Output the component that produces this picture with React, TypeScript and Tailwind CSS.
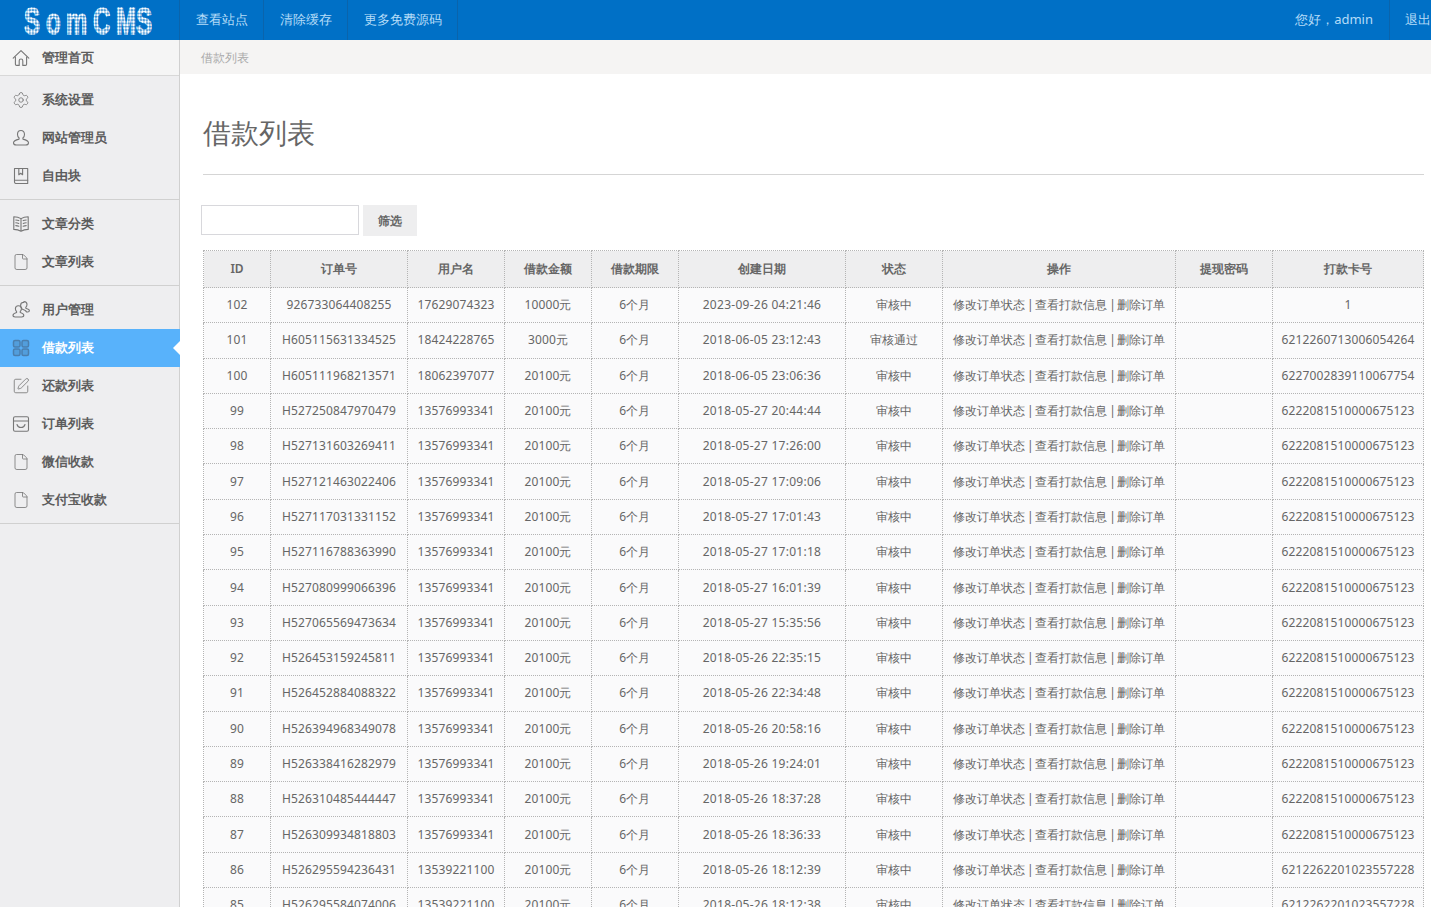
import React from "react";
import { Settings, File, SquarePen } from "lucide-react";

const font = "font-['Open_Sans','Noto_Sans_CJK_SC',sans-serif]";

type Row = [string, string, string, string, string, string, string];
const rows: Row[] = [
  ["102", "926733064408255", "17629074323", "10000元", "2023-09-26 04:21:46", "审核中", "1"],
  ["101", "H605115631334525", "18424228765", "3000元", "2018-06-05 23:12:43", "审核通过", "6212260713006054264"],
  ["100", "H605111968213571", "18062397077", "20100元", "2018-06-05 23:06:36", "审核中", "6227002839110067754"],
  ["99", "H527250847970479", "13576993341", "20100元", "2018-05-27 20:44:44", "审核中", "6222081510000675123"],
  ["98", "H527131603269411", "13576993341", "20100元", "2018-05-27 17:26:00", "审核中", "6222081510000675123"],
  ["97", "H527121463022406", "13576993341", "20100元", "2018-05-27 17:09:06", "审核中", "6222081510000675123"],
  ["96", "H527117031331152", "13576993341", "20100元", "2018-05-27 17:01:43", "审核中", "6222081510000675123"],
  ["95", "H527116788363990", "13576993341", "20100元", "2018-05-27 17:01:18", "审核中", "6222081510000675123"],
  ["94", "H527080999066396", "13576993341", "20100元", "2018-05-27 16:01:39", "审核中", "6222081510000675123"],
  ["93", "H527065569473634", "13576993341", "20100元", "2018-05-27 15:35:56", "审核中", "6222081510000675123"],
  ["92", "H526453159245811", "13576993341", "20100元", "2018-05-26 22:35:15", "审核中", "6222081510000675123"],
  ["91", "H526452884088322", "13576993341", "20100元", "2018-05-26 22:34:48", "审核中", "6222081510000675123"],
  ["90", "H526394968349078", "13576993341", "20100元", "2018-05-26 20:58:16", "审核中", "6222081510000675123"],
  ["89", "H526338416282979", "13576993341", "20100元", "2018-05-26 19:24:01", "审核中", "6222081510000675123"],
  ["88", "H526310485444447", "13576993341", "20100元", "2018-05-26 18:37:28", "审核中", "6222081510000675123"],
  ["87", "H526309934818803", "13576993341", "20100元", "2018-05-26 18:36:33", "审核中", "6222081510000675123"],
  ["86", "H526295594236431", "13539221100", "20100元", "2018-05-26 18:12:39", "审核中", "6212262201023557228"],
  ["85", "H526295584074006", "13539221100", "20100元", "2018-05-26 18:12:38", "审核中", "6212262201023557228"],
];

const heads = ["ID", "订单号", "用户名", "借款金额", "借款期限", "创建日期", "状态", "操作", "提现密码", "打款卡号"];
const widths = ["w-[67px]", "w-[137px]", "w-[97px]", "w-[87px]", "w-[87px]", "w-[167px]", "w-[97px]", "w-[233px]", "w-[97px]", "w-[151px]"];

type IconProps = { className?: string; strokeWidth?: number };

function Svg({ className, strokeWidth = 1.1, children }: IconProps & { children: React.ReactNode }) {
  return (
    <svg viewBox="0 0 18 18" fill="none" stroke="currentColor" strokeWidth={strokeWidth} strokeLinecap="round" strokeLinejoin="round" className={className}>
      {children}
    </svg>
  );
}

const HomeI = (p: IconProps) => (
  <Svg {...p}>
    <path d="M1.2 9.2 9 1.6l7.8 7.6" />
    <path d="M3.4 8v7.2q0 1.2 1.2 1.2h2.6v-4.6q0-1.8 1.8-1.8t1.8 1.8v4.6h2.6q1.2 0 1.2-1.2V8" />
  </Svg>
);
const UserI = (p: IconProps) => (
  <Svg {...p}>
    <path d="M9 1.5c-2.2 0-3.5 1.7-3.5 3.9 0 1.5.7 2.8 1.6 3.6v1.1c-2 .5-5.6 1.6-5.6 3.6 0 1.5 1.2 2.3 3 2.3h9c1.8 0 3-.8 3-2.3 0-2-3.6-3.1-5.6-3.6V9c.9-.8 1.6-2.1 1.6-3.6 0-2.2-1.3-3.9-3.5-3.9Z" />
  </Svg>
);
const BookI = (p: IconProps) => (
  <Svg {...p}>
    <path d="M2.5 1.5h13.2v15H3.6a1.4 1.4 0 0 1-1.1-1.4Z" />
    <path d="M2.5 13.3h13.2" />
    <path d="M6.8 1.5v6.2l1.9-1.5 1.9 1.5V1.5" />
  </Svg>
);
const OpenBookI = (p: IconProps) => (
  <Svg {...p}>
    <path d="M9 3.6C7 2.4 4.4 1.8 1.8 1.8v12.6c2.6 0 5.2.6 7.2 1.8 2-1.2 4.6-1.8 7.2-1.8V1.8C13.6 1.8 11 2.4 9 3.6Zm0 0v12.6" />
    <path d="M3.8 5c1 0 2 .2 3 .6M3.8 7.8c1 0 2 .2 3 .6M3.8 10.6c1 0 2 .2 3 .6M14.2 5c-1 0-2 .2-3 .6M14.2 7.8c-1 0-2 .2-3 .6M14.2 10.6c-1 0-2 .2-3 .6" />
  </Svg>
);
const UsersI = (p: IconProps) => (
  <Svg {...p}>
    <path d="M11.6 1.4c-1.9 0-3 1.3-3 3 0 1.1.5 2.1 1.2 2.8v.8c1.8.5 4.2 1.4 4.8 3h1.1c1 0 1.7-.5 1.7-1.4 0-1.2-2.3-2-3.6-2.4v-.8c.7-.7 1.2-1.7 1.2-2.8 0-1.7-1.1-3-3-3Z" />
    <path d="M6.4 4.8c-1.9 0-3 1.3-3 3 0 1.1.5 2.1 1.2 2.8v.9C3 12 1 12.8 1 14.3c0 1.1.9 1.7 2.1 1.7h6.6c1.2 0 2.1-.6 2.1-1.7 0-1.5-2-2.3-3.6-2.8v-.9c.7-.7 1.2-1.7 1.2-2.8 0-1.7-1.1-3-3-3Z" />
  </Svg>
);
const GridI = (p: IconProps) => (
  <Svg {...p}>
    <rect x="1.5" y="1.5" width="6.5" height="6.5" rx="1.5" fill="currentColor" fillOpacity="0.4" />
    <rect x="10" y="1.5" width="6.5" height="6.5" rx="1.5" fill="currentColor" fillOpacity="0.4" />
    <rect x="1.5" y="10" width="6.5" height="6.5" rx="1.5" fill="currentColor" fillOpacity="0.4" />
    <rect x="10" y="10" width="6.5" height="6.5" rx="1.5" fill="currentColor" fillOpacity="0.4" />
  </Svg>
);
const InboxI = (p: IconProps) => (
  <Svg {...p}>
    <rect x="1.5" y="1.8" width="15" height="14.5" rx="1.5" />
    <path d="M1.5 6h15" />
    <path d="M5 9.5c.6 2 2.1 3 4 3s3.4-1 4-3" />
  </Svg>
);

function Item({ icon: Icon, label, active }: { icon: React.ElementType; label: string; active?: boolean }) {
  return (
    <div className={`relative flex h-[38px] items-center pl-[12px] text-[13px] font-semibold ${active ? "-mr-px bg-[#58b2fb] text-white" : "text-[#5c5c5c]"}`}>
      <Icon className={`mr-[12px] h-[18px] w-[18px] shrink-0 ${active ? "text-[#4a7fae]" : "text-[#777]"}`} strokeWidth={active ? 1.5 : 1.1} />
      {label}
      {active && <span className="absolute right-0 top-[12px] h-0 w-0 border-y-[7px] border-r-[7px] border-y-transparent border-r-white" />}
    </div>
  );
}

function Logo() {
  return (
    <svg width="130" height="32" viewBox="0 0 130 32" aria-label="SomCMS" className="overflow-visible">
      <defs>
        <pattern id="dots" width="3" height="2.14" patternUnits="userSpaceOnUse">
          <rect x="0.3" y="0.2" width="2.3" height="1.7" rx="0.5" fill="#fff" />
        </pattern>
      </defs>
      <text
        transform="translate(0 29.5) scale(1 1.55)"
        x="0 22 42 69 92 112"
        fontFamily="'Liberation Sans', sans-serif"
        fontWeight="700"
        fontSize="24"
        fill="url(#dots)"
        stroke="url(#dots)"
        strokeWidth="1"
      >
        SomCMS
      </text>
    </svg>
  );
}

const cell = "border border-dotted border-[#b4b4b4] p-0 text-center tracking-[0.14px]";

export default function App() {
  return (
    <div className={`h-[907px] w-[1431px] overflow-hidden bg-white text-[12px] text-[#666] ${font}`}>
      <header className="flex h-10 items-center bg-[#0070c6] text-[13px] text-[#b5dcf8]">
        <div className="flex h-10 w-[180px] shrink-0 items-center justify-center border-r border-[#0a64ac] pr-[2px]">
          <Logo />
        </div>
        <a className="flex h-10 w-[84px] items-center justify-center border-r border-[#0a64ac]">查看站点</a>
        <a className="flex h-10 w-[84px] items-center justify-center border-r border-[#0a64ac]">清除缓存</a>
        <a className="flex h-10 w-[110px] items-center justify-center border-r border-[#0a64ac]">更多免费源码</a>
        <div className="ml-auto flex h-10 items-center">
          <span className="pr-[16px]">您好，admin</span>
          <a className="flex h-10 w-[42px] items-center whitespace-nowrap border-l border-[#0a64ac] pl-[15px]">退出</a>
        </div>
      </header>
      <div className="flex h-[867px]">
        <aside className="w-[180px] shrink-0 border-r border-[#d0d0d0] bg-[#eeeef0]">
          <div className="flex h-[36px] items-center border-b border-[#d8d8d8] bg-[#f5f5f5] pl-[12px] pt-[1px] text-[13px] font-semibold text-[#5c5c5c]">
            <HomeI className="mr-[12px] h-[18px] w-[18px] text-[#777]" />
            管理首页
          </div>
          <div className="border-b border-[#d0d0d0] pt-[5px] pb-[4px]">
            <Item icon={Settings} label="系统设置" />
            <Item icon={UserI} label="网站管理员" />
            <Item icon={BookI} label="自由块" />
          </div>
          <div className="border-b border-[#d0d0d0] pt-[5px] pb-[4px]">
            <Item icon={OpenBookI} label="文章分类" />
            <Item icon={File} label="文章列表" />
          </div>
          <div className="border-b border-[#d0d0d0] pt-[5px] pb-[4px]">
            <Item icon={UsersI} label="用户管理" />
            <Item icon={GridI} label="借款列表" active />
            <Item icon={SquarePen} label="还款列表" />
            <Item icon={InboxI} label="订单列表" />
            <Item icon={File} label="微信收款" />
            <Item icon={File} label="支付宝收款" />
          </div>
        </aside>
        <main className="min-w-0 flex-1">
          <div className="flex h-[34px] items-center bg-[#f5f4f3] pl-[21px] pt-[2px] text-[12px] text-[#aaa]">借款列表</div>
          <div className="pl-[23px] pr-[7px]">
            <h1 className="flex h-[101px] items-center border-b border-[#d5d5d5] pt-[16px] text-[28px] font-normal text-[#666]">借款列表</h1>
            <div className="-ml-[2px] flex h-[75px] items-start gap-[4px] pt-[30px]">
              <input className="h-[30px] w-[158px] border-[1.5px] border-[#d8d8dc] bg-white" />
              <button className="h-[31px] w-[54px] bg-[#eeeeef] text-[12px] font-semibold text-[#666]">筛选</button>
            </div>
            <table className="w-[1221px] table-fixed border-collapse border border-dotted border-[#b4b4b4]">
              <colgroup>
                {widths.map((w, i) => (
                  <col key={i} className={w} />
                ))}
              </colgroup>
              <thead>
                <tr className="h-[37px] bg-[#eeeeef]">
                  {heads.map((h) => (
                    <th key={h} className="border border-dotted border-[#b4b4b4] p-0 pb-[1px] text-center text-[12px] font-semibold text-[#666]">
                      {h}
                    </th>
                  ))}
                </tr>
              </thead>
              <tbody>
                {rows.map((r) => (
                  <tr key={r[0]} className="h-[35.3px] bg-[#fafafb]">
                    <td className={cell}>{r[0]}</td>
                    <td className={cell}>{r[1]}</td>
                    <td className={cell}>{r[2]}</td>
                    <td className={cell}>{r[3]}</td>
                    <td className={cell}>6个月</td>
                    <td className="border border-dotted border-[#b4b4b4] p-0 text-center tracking-[0.27px]">{r[4]}</td>
                    <td className={cell}>{r[5]}</td>
                    <td className="border border-dotted border-[#b4b4b4] p-0 text-center">
                      修改订单状态<span className="tracking-[-0.9px]"> | </span>查看打款信息<span className="tracking-[-0.9px]"> | </span>删除订单
                    </td>
                    <td className={cell}></td>
                    <td className={cell}>{r[6]}</td>
                  </tr>
                ))}
              </tbody>
            </table>
          </div>
        </main>
      </div>
    </div>
  );
}
